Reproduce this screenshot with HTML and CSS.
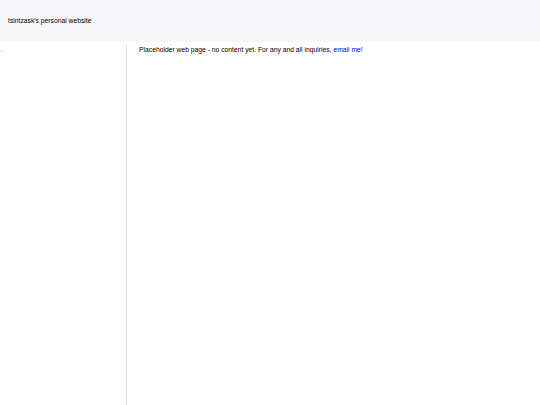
FILE: index.html
```html
<!DOCTYPE html>
<html>
<head>
<meta charset="utf-8">
<link rel="stylesheet" href="styles.css">
</head>
<body>
<header class="topbar">
  <span class="site-title">tsintzask's personal website</span>
</header>
<div class="layout">
  <nav class="sidebar"><span class="dots">....</span></nav>
  <main class="content">
    <p class="intro">Placeholder web page - no content yet. For any and all inquiries, <a class="mail" href="#">email me!</a></p>
  </main>
</div>
</body>
</html>
```
FILE: styles.css
```css
html, body {
  margin: 0;
  padding: 0;
  height: 100%;
  background: #ffffff;
  font-family: "Liberation Sans", Arial, sans-serif;
  font-size: 6.75px;
  color: #000;
}
.topbar {
  height: 42px;
  background: #f7f7fa;
  display: flex;
  align-items: center;
  padding-left: 8px;
}
.site-title {
  font-size: 6.75px;
  margin-top: -1px;
}
.layout {
  display: flex;
  height: calc(100% - 42px);
  padding-top: 3px;
  box-sizing: border-box;
}
.sidebar {
  width: 126px;
  border-right: 1px solid #dcdcdc;
  flex-shrink: 0;
}
.dots {
  display: block;
  color: #999;
  font-size: 5px;
  line-height: 5px;
  margin-top: 3px;
  letter-spacing: -0.5px;
}
.content {
  padding-left: 12px;
}
.intro {
  margin: 0;
  line-height: 9px;
}
.mail {
  color: #0000ee;
  text-decoration: none;
}
```
